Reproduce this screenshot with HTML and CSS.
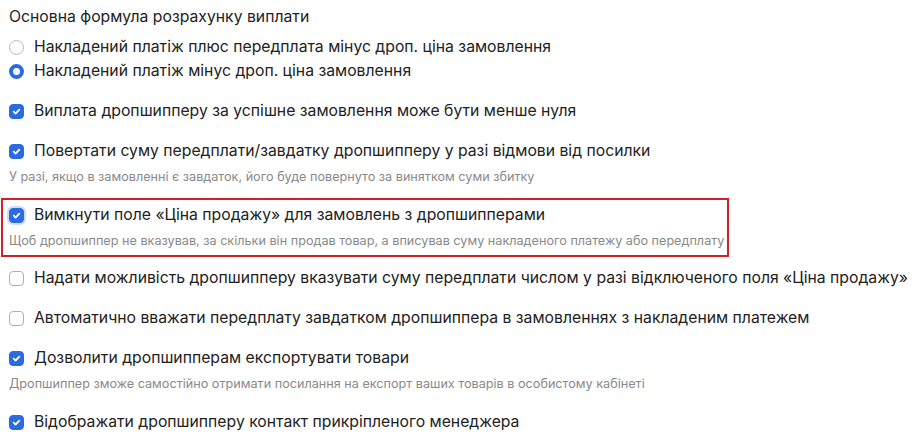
FILE: index.html
```html
<!DOCTYPE html>
<html lang="uk">
<head>
    <meta charset="UTF-8">
    <meta name="viewport" content="width=device-width, initial-scale=1.0">
    <title>Налаштування дропшиппінгу</title>
    <link rel="stylesheet" href="styles.css">
</head>
<body>
    <div class="settings">
        <div class="group-title">Основна формула розрахунку виплати</div>
        <div class="radio-group">
            <label class="radio-row">
                <span class="radio"></span>
                <span>Накладений платіж плюс передплата мінус дроп. ціна замовлення</span>
            </label>
            <label class="radio-row">
                <span class="radio checked"></span>
                <span>Накладений платіж мінус дроп. ціна замовлення</span>
            </label>
        </div>

        <div class="option">
            <label class="check-row">
                <span class="check checked"><svg viewBox="0 0 14 14"><path d="M4 7.2l2 2 4-4.2"/></svg></span>
                <span>Виплата дропшипперу за успішне замовлення може бути менше нуля</span>
            </label>
        </div>

        <div class="option">
            <label class="check-row">
                <span class="check checked"><svg viewBox="0 0 14 14"><path d="M4 7.2l2 2 4-4.2"/></svg></span>
                <span>Повертати суму передплати/завдатку дропшипперу у разі відмови від посилки</span>
            </label>
            <div class="hint">У разі, якщо в замовленні є завдаток, його буде повернуто за винятком суми збитку</div>
        </div>

        <div class="option marked">
            <label class="check-row">
                <span class="check checked focused"><svg viewBox="0 0 14 14"><path d="M4 7.2l2 2 4-4.2"/></svg></span>
                <span>Вимкнути поле «Ціна продажу» для замовлень з дропшипперами</span>
            </label>
            <div class="hint">Щоб дропшиппер не вказував, за скільки він продав товар, а вписував суму накладеного платежу або передплату</div>
        </div>

        <div class="option">
            <label class="check-row">
                <span class="check"></span>
                <span>Надати можливість дропшипперу вказувати суму передплати числом у разі відключеного поля «Ціна продажу»</span>
            </label>
        </div>

        <div class="option">
            <label class="check-row">
                <span class="check"></span>
                <span>Автоматично вважати передплату завдатком дропшиппера в замовленнях з накладеним платежем</span>
            </label>
        </div>

        <div class="option">
            <label class="check-row">
                <span class="check checked"><svg viewBox="0 0 14 14"><path d="M4 7.2l2 2 4-4.2"/></svg></span>
                <span>Дозволити дропшипперам експортувати товари</span>
            </label>
            <div class="hint">Дропшиппер зможе самостійно отримати посилання на експорт ваших товарів в особистому кабінеті</div>
        </div>

        <div class="option">
            <label class="check-row">
                <span class="check checked"><svg viewBox="0 0 14 14"><path d="M4 7.2l2 2 4-4.2"/></svg></span>
                <span>Відображати дропшипперу контакт прикріпленого менеджера</span>
            </label>
        </div>
    </div>
</body>
</html>
```

FILE: styles.css
```css
body {
    margin: 0;
    background: #ffffff;
    font-family: 'Inter', 'Noto Sans', sans-serif;
    color: #222222;
    font-size: 15.75px;
}

.settings {
    padding: 5px 9px 0;
    white-space: nowrap;
}

.group-title {
    line-height: 24px;
}

.radio-group {
    margin-top: 6px;
    margin-bottom: 16px;
}

.radio-row,
.check-row {
    display: flex;
    align-items: center;
    gap: 10px;
    line-height: 24px;
}

.radio {
    width: 15px;
    height: 15px;
    box-sizing: border-box;
    border: 1px solid #b8b8b8;
    border-radius: 50%;
    flex-shrink: 0;
}

.radio.checked {
    border: 4.5px solid #2b6be2;
    background: #ffffff;
}

.option {
    margin-bottom: 16px;
}

.check {
    width: 15px;
    height: 15px;
    box-sizing: border-box;
    border: 1px solid #b0b0b0;
    border-radius: 4px;
    flex-shrink: 0;
    display: flex;
}

.check.checked {
    background: #2b6be2;
    border-color: #2b6be2;
}

.check svg {
    width: 13px;
    height: 13px;
    fill: none;
    stroke: #ffffff;
    stroke-width: 2;
    stroke-linecap: round;
    stroke-linejoin: round;
}

.check.focused {
    box-shadow: 0 0 0 2px #cfdcf7;
}

.hint {
    margin-top: 4px;
    font-size: 12.65px;
    line-height: 20px;
    color: #8a8a8a;
}

.marked {
    position: relative;
    width: fit-content;
    margin-bottom: 15px;
}

.marked::after {
    content: "";
    position: absolute;
    top: -5px;
    bottom: -6px;
    left: -8px;
    right: -5px;
    border: 2px solid #d0212b;
    pointer-events: none;
}
```
